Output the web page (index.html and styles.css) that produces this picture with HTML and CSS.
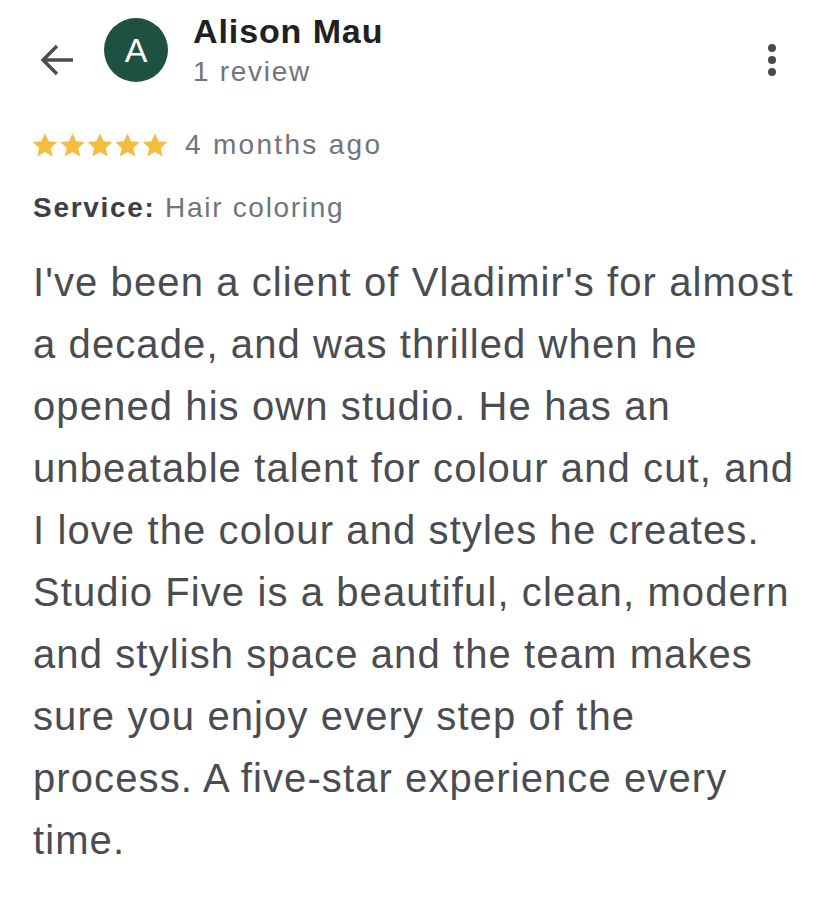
FILE: index.html
```html
<!DOCTYPE html>
<html lang="en">
<head>
  <meta charset="UTF-8" />
  <meta name="viewport" content="width=device-width, initial-scale=1.0" />
  <title>Review - Alison Mau</title>
  <link rel="stylesheet" href="styles.css">
</head>
<body>

  <div class="review">

    <!-- Header -->
    <div class="header">
      <div class="back">
        <svg width="34" height="34" viewBox="0 0 34 34">
          <path d="M33 17H3 M17 3L3 17L17 31" fill="none" stroke="#4a4b50" stroke-width="3.4"/>
        </svg>
      </div>
      <div class="avatar">A</div>
      <div class="author">
        <div class="name">Alison Mau</div>
        <div class="count">1 review</div>
      </div>
      <div class="menu">
        <span class="dot"></span>
        <span class="dot"></span>
        <span class="dot"></span>
      </div>
    </div>

    <!-- Rating -->
    <div class="rating">
      <div class="stars">
        <svg width="136" height="25" viewBox="0 0 136 25">
          <defs>
            <path id="star" d="M12.5 0.3l3.6 7.9 8.6 0.9-6.4 5.8 1.9 8.5-7.7-4.4-7.7 4.4 1.9-8.5-6.4-5.8 8.6-0.9z"/>
          </defs>
          <use href="#star" x="-0.5" fill="#f4bd42"/>
          <use href="#star" x="27" fill="#f4bd42"/>
          <use href="#star" x="54.5" fill="#f4bd42"/>
          <use href="#star" x="82" fill="#f4bd42"/>
          <use href="#star" x="109.5" fill="#f4bd42"/>
        </svg>
      </div>
      <span class="date">4 months ago</span>
    </div>

    <div class="service"><b>Service:</b> Hair coloring</div>

    <p class="text">I've been a client of Vladimir's for almost a decade, and was thrilled when he opened his own studio. He has an unbeatable talent for colour and cut, and I love the colour and styles he creates. Studio Five is a beautiful, clean, modern and stylish space and the team makes sure you enjoy every step of the process. A five-star experience every time.</p>

  </div>

</body>
</html>
```

FILE: styles.css
```css
* {
  box-sizing: border-box;
  margin: 0;
  padding: 0;
}

body {
  background: #fff;
  font-family: 'Liberation Sans', Arial, sans-serif;
  color: #3c4043;
}

.review {
  width: 828px;
  padding: 11px 31px 0 33px;
}

.header {
  display: flex;
  align-items: flex-start;
}

.back {
  width: 34px;
  height: 34px;
  margin: 32px 0 0 7px;
}

.back svg {
  display: block;
}

.avatar {
  width: 64px;
  height: 64px;
  margin: 7px 0 0 30px;
  border-radius: 50%;
  background: #1f5142;
  color: #fff;
  font-size: 34px;
  line-height: 64px;
  text-align: center;
}

.author {
  margin-left: 25px;
  flex: 1;
}

.name {
  font-size: 34px;
  line-height: 40px;
  font-weight: bold;
  color: #202124;
  letter-spacing: 0.9px;
}

.count {
  margin-top: 3px;
  font-size: 28px;
  line-height: 36px;
  color: #70757a;
  letter-spacing: 1.7px;
}

.menu {
  display: flex;
  flex-direction: column;
  gap: 4px;
  margin: 33px 21px 0 0;
}

.dot {
  width: 8px;
  height: 8px;
  border-radius: 50%;
  background: #4a4b50;
}

.rating {
  display: flex;
  align-items: center;
  height: 36px;
  margin-top: 37px;
}

.stars {
  display: flex;
  margin-right: 16px;
}

.stars svg {
  display: block;
}

.date {
  font-size: 28px;
  line-height: 36px;
  color: #70757a;
  letter-spacing: 2.3px;
}

.service {
  margin-top: 27px;
  font-size: 28px;
  line-height: 36px;
  color: #70757a;
  letter-spacing: 1.7px;
}

.service b {
  color: #3c4043;
}

.text {
  margin-top: 25px;
  font-size: 40px;
  line-height: 62px;
  color: #4a4c51;
  letter-spacing: 1.1px;
}
```
